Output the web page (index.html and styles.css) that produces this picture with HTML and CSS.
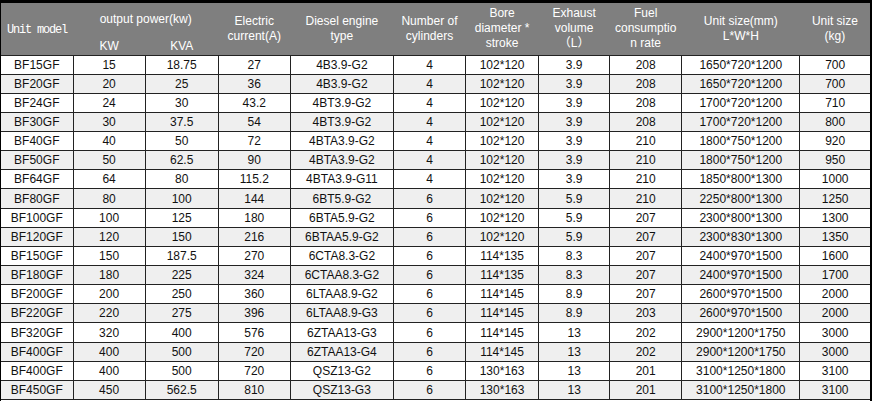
FILE: index.html
```html
<!DOCTYPE html>
<html>
<head>
<meta charset="utf-8">
<link rel="stylesheet" href="styles.css">
</head>
<body>
<div class="frame">
<table class="spec">
<colgroup>
<col class="c72"><col class="c72"><col class="c73"><col class="c72"><col class="c103"><col class="c72"><col class="c73"><col class="c71"><col class="c72"><col class="c118"><col class="c70">
</colgroup>
<thead>
<tr class="h1">
<th rowspan="2" class="model">Unit model</th>
<th colspan="2">output power(kw)</th>
<th rowspan="2">Electric<br>current(A)</th>
<th rowspan="2">Diesel engine<br>type</th>
<th rowspan="2">Number of<br>cylinders</th>
<th rowspan="2">Bore<br>diameter *<br>stroke</th>
<th rowspan="2">Exhaust<br>volume<br>（L）</th>
<th rowspan="2">Fuel<br>consumptio<br>n rate</th>
<th rowspan="2">Unit size(mm)<br>L*W*H</th>
<th rowspan="2">Unit size<br>(kg)</th>
</tr>
<tr class="h2">
<th>KW</th>
<th>KVA</th>
</tr>
</thead>
<tbody>
<tr><td>BF15GF</td><td>15</td><td>18.75</td><td>27</td><td>4B3.9-G2</td><td>4</td><td>102*120</td><td>3.9</td><td>208</td><td>1650*720*1200</td><td>700</td></tr>
<tr><td>BF20GF</td><td>20</td><td>25</td><td>36</td><td>4B3.9-G2</td><td>4</td><td>102*120</td><td>3.9</td><td>208</td><td>1650*720*1200</td><td>700</td></tr>
<tr><td>BF24GF</td><td>24</td><td>30</td><td>43.2</td><td>4BT3.9-G2</td><td>4</td><td>102*120</td><td>3.9</td><td>208</td><td>1700*720*1200</td><td>710</td></tr>
<tr><td>BF30GF</td><td>30</td><td>37.5</td><td>54</td><td>4BT3.9-G2</td><td>4</td><td>102*120</td><td>3.9</td><td>208</td><td>1700*720*1200</td><td>800</td></tr>
<tr><td>BF40GF</td><td>40</td><td>50</td><td>72</td><td>4BTA3.9-G2</td><td>4</td><td>102*120</td><td>3.9</td><td>210</td><td>1800*750*1200</td><td>920</td></tr>
<tr><td>BF50GF</td><td>50</td><td>62.5</td><td>90</td><td>4BTA3.9-G2</td><td>4</td><td>102*120</td><td>3.9</td><td>210</td><td>1800*750*1200</td><td>950</td></tr>
<tr><td>BF64GF</td><td>64</td><td>80</td><td>115.2</td><td>4BTA3.9-G11</td><td>4</td><td>102*120</td><td>3.9</td><td>210</td><td>1850*800*1300</td><td>1000</td></tr>
<tr><td>BF80GF</td><td>80</td><td>100</td><td>144</td><td>6BT5.9-G2</td><td>6</td><td>102*120</td><td>5.9</td><td>210</td><td>2250*800*1300</td><td>1250</td></tr>
<tr><td>BF100GF</td><td>100</td><td>125</td><td>180</td><td>6BTA5.9-G2</td><td>6</td><td>102*120</td><td>5.9</td><td>207</td><td>2300*800*1300</td><td>1300</td></tr>
<tr><td>BF120GF</td><td>120</td><td>150</td><td>216</td><td>6BTAA5.9-G2</td><td>6</td><td>102*120</td><td>5.9</td><td>207</td><td>2300*830*1300</td><td>1350</td></tr>
<tr><td>BF150GF</td><td>150</td><td>187.5</td><td>270</td><td>6CTA8.3-G2</td><td>6</td><td>114*135</td><td>8.3</td><td>207</td><td>2400*970*1500</td><td>1600</td></tr>
<tr><td>BF180GF</td><td>180</td><td>225</td><td>324</td><td>6CTAA8.3-G2</td><td>6</td><td>114*135</td><td>8.3</td><td>207</td><td>2400*970*1500</td><td>1700</td></tr>
<tr><td>BF200GF</td><td>200</td><td>250</td><td>360</td><td>6LTAA8.9-G2</td><td>6</td><td>114*145</td><td>8.9</td><td>207</td><td>2600*970*1500</td><td>2000</td></tr>
<tr><td>BF220GF</td><td>220</td><td>275</td><td>396</td><td>6LTAA8.9-G3</td><td>6</td><td>114*145</td><td>8.9</td><td>203</td><td>2600*970*1500</td><td>2000</td></tr>
<tr><td>BF320GF</td><td>320</td><td>400</td><td>576</td><td>6ZTAA13-G3</td><td>6</td><td>114*145</td><td>13</td><td>202</td><td>2900*1200*1750</td><td>3000</td></tr>
<tr><td>BF400GF</td><td>400</td><td>500</td><td>720</td><td>6ZTAA13-G4</td><td>6</td><td>114*145</td><td>13</td><td>202</td><td>2900*1200*1750</td><td>3000</td></tr>
<tr><td>BF400GF</td><td>400</td><td>500</td><td>720</td><td>QSZ13-G2</td><td>6</td><td>130*163</td><td>13</td><td>201</td><td>3100*1250*1800</td><td>3100</td></tr>
<tr><td>BF450GF</td><td>450</td><td>562.5</td><td>810</td><td>QSZ13-G3</td><td>6</td><td>130*163</td><td>13</td><td>201</td><td>3100*1250*1800</td><td>3100</td></tr>
</tbody>
</table>
</div>
</body>
</html>
```

FILE: styles.css
```css
html, body {
  margin: 0;
  padding: 0;
  background: #ffffff;
}
.frame {
  width: 869px;
  height: 398px;
  border-top: 3px solid #000;
  border-left: 1px solid #000;
  border-right: 2px solid #000;
  background: #fff;
  overflow: hidden;
}
.spec {
  border-collapse: collapse;
  table-layout: fixed;
  width: 869px;
  font-family: "Liberation Sans", Arial, "Noto Sans CJK SC", sans-serif;
  font-size: 12px;
  color: #111;
}
.c72 { width: 72px; }
.c73 { width: 73px; }
.c71 { width: 71px; }
.c70 { width: 70px; }
.c103 { width: 103px; }
.c118 { width: 118px; }
.spec th {
  background: #7f7f7f;
  color: #fff;
  font-weight: normal;
  line-height: 15px;
  padding: 0;
  text-align: center;
  vertical-align: middle;
}
.spec thead tr.h1 { height: 31px; }
.spec thead tr.h2 { height: 21px; }
.spec thead tr.h2 th { vertical-align: top; padding-top: 5px; }
.spec thead tr.h1 th[colspan] { vertical-align: middle; padding-top: 2px; }
.spec th.model {
  font-family: "Liberation Mono", "Courier New", monospace;
  font-size: 12px;
  letter-spacing: -1.2px;
  padding-top: 3px;
}
.wide {
  font-family: "Noto Sans CJK SC", sans-serif;
}
.spec thead { border-bottom: 1px solid #222; }
.spec td {
  border: 1px solid #222;
  height: 18px;
  padding: 0;
  line-height: 18px;
  text-align: center;
  white-space: nowrap;
}
.spec tbody tr { height: 19.15px; }
.spec tbody tr:nth-child(even) td { background: #efefef; }
.spec tbody tr td:first-child { border-left: none; }
.spec tbody tr td:last-child { border-right: none; }
```
